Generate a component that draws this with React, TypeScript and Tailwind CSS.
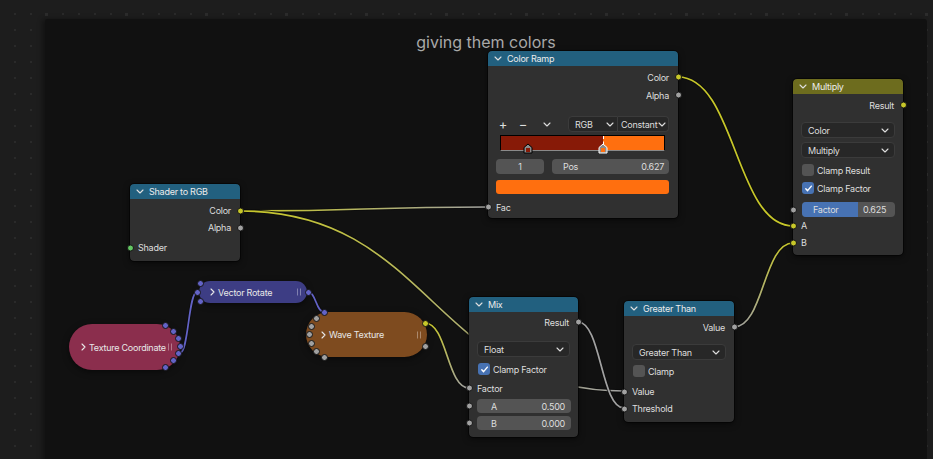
import clsx from "clsx";
import type { ReactNode } from "react";

const SY = "bg-[#c7c729]";
const SG = "bg-[#a1a1a1]";
const SGR = "bg-[#63c763]";
const SB = "bg-[#6363c7]";
const BLUE = "bg-[#22607f]";
const OLIVE = "bg-[#6d6c1e]";

const Down = ({ className }: { className?: string }) => (
  <svg viewBox="0 0 8 5" className={clsx("h-[5px] w-[8px] shrink-0", className)} fill="none" stroke="currentColor" strokeWidth="1.1" strokeLinecap="round" strokeLinejoin="round">
    <path d="M1 1l3 3 3-3" />
  </svg>
);

const Right = () => (
  <svg viewBox="0 0 5 8" className="h-[8px] w-[5px] shrink-0" fill="none" stroke="currentColor" strokeWidth="1.1" strokeLinecap="round" strokeLinejoin="round">
    <path d="M1 1l3 3-3 3" />
  </svg>
);

const Grip = ({ className }: { className: string }) => (
  <span className={clsx("absolute top-1/2 flex -translate-y-1/2 gap-[2px]", className)}>
    <span className="h-[7px] w-[1px] bg-white/35" />
    <span className="h-[7px] w-[1px] bg-white/35" />
  </span>
);

const Socket = ({ side, color }: { side: "l" | "r"; color: string }) => (
  <span className={clsx("absolute top-1/2 h-[7px] w-[7px] -translate-y-1/2 rounded-full border border-[#161616]", side === "l" ? "-left-[3.5px]" : "-right-[3.5px]", color)} />
);

const Dot = ({ pos, color }: { pos: string; color: string }) => (
  <span className={clsx("absolute h-[7px] w-[7px] rounded-full border border-[#161616]", pos, color)} />
);

const Row = ({ label, side, sock, h = "h-[18px]", className }: { label: string; side: "l" | "r"; sock?: string; h?: string; className?: string }) => (
  <div className={clsx("relative flex items-center px-[9px]", h, side === "r" ? "justify-end" : "justify-start pl-[8px]", className)}>
    <span>{label}</span>
    {sock && <Socket side={side} color={sock} />}
  </div>
);

const Select = ({ label, className }: { label: string; className?: string }) => (
  <div className={clsx("mx-[8px] flex h-[16px] items-center justify-between rounded-[4px] border border-[#3b3b3b] bg-[#272727] pl-[6px] pr-[5px]", className)}>
    <span>{label}</span>
    <Down />
  </div>
);

const Check = ({ label, on, className }: { label: string; on?: boolean; className?: string }) => (
  <div className={clsx("flex h-[18px] items-center gap-[3px] pl-[9px]", className)}>
    <span className={clsx("flex h-[12px] w-[12px] items-center justify-center rounded-[3px]", on ? "bg-[#4772b3]" : "bg-[#545454]")}>
      {on && (
        <svg viewBox="0 0 10 10" className="h-[9px] w-[9px]" fill="none" stroke="white" strokeWidth="1.6" strokeLinecap="round" strokeLinejoin="round">
          <path d="M2 5.2l2 2.2L8.2 2.4" />
        </svg>
      )}
    </span>
    <span>{label}</span>
  </div>
);

const Field = ({ label, value, sock, className }: { label: string; value: string; sock?: string; className?: string }) => (
  <div className={clsx("relative h-[14px]", className)}>
    {sock && <Socket side="l" color={sock} />}
    <div className="ml-[8px] mr-[7px] flex h-full items-center justify-between rounded-[4px] bg-[#545454] pl-[14px] pr-[6px]">
      <span>{label}</span>
      <span>{value}</span>
    </div>
  </div>
);

const NodeBox = ({ pos, title, head, children }: { pos: string; title: string; head: string; children: ReactNode }) => (
  <div className={clsx("absolute rounded-[4px] bg-[#303030] text-[#dedede] shadow-[0_2px_6px_rgba(0,0,0,0.55)] outline outline-1 outline-black/50", pos)}>
    <div className={clsx("flex h-[15px] items-center gap-[5px] rounded-t-[4px] pl-[6px] text-[#ececec]", head)}>
      <Down className="text-[#e0e0e0]" />
      <span>{title}</span>
    </div>
    {children}
  </div>
);

type Wire = { a: [number, number]; b: [number, number]; c1: string; c2: string };

const wires: Wire[] = [
  { a: [678, 77], b: [793, 226], c1: "#c7c729", c2: "#c7c729" },
  { a: [734, 327], b: [793, 243], c1: "#a1a1a1", c2: "#c7c729" },
  { a: [240, 211], b: [488, 207], c1: "#c7c729", c2: "#a1a1a1" },
  { a: [240, 211], b: [624, 391], c1: "#c7c729", c2: "#a1a1a1" },
  { a: [425, 323], b: [469, 388], c1: "#c7c729", c2: "#a1a1a1" },
  { a: [578, 322], b: [624, 408], c1: "#a1a1a1", c2: "#a1a1a1" },
  { a: [308, 292], b: [324, 312], c1: "#6363c7", c2: "#6363c7" },
  { a: [180, 353], b: [197, 292], c1: "#6363c7", c2: "#6363c7" },
];

const curve = ([x1, y1]: [number, number], [x2, y2]: [number, number]) => {
  const h = Math.max(Math.abs(x2 - x1) * 0.5, 6);
  return `M${x1} ${y1}C${x1 + h} ${y1} ${x2 - h} ${y2} ${x2} ${y2}`;
};

export default function App() {
  return (
    <div className="relative h-[459px] w-[933px] overflow-hidden bg-[#1d1d1d] font-['Inter','DejaVu_Sans',sans-serif] text-[9px] leading-none tracking-[-0.25px]">
      {/* background grid */}
      <svg className="absolute inset-0 h-full w-full">
        <defs>
          <pattern id="g" x="14" y="13" width="16" height="16" patternUnits="userSpaceOnUse">
            <rect width="2" height="2" fill="#2a2a2a" />
          </pattern>
          <pattern id="G" x="45" y="13" width="80" height="80" patternUnits="userSpaceOnUse">
            <rect width="3" height="3" fill="#2c2c2c" />
          </pattern>
        </defs>
        <rect width="100%" height="100%" fill="url(#g)" />
        <rect width="100%" height="100%" fill="url(#G)" />
      </svg>

      {/* frame */}
      <div className="relative ml-[45px] mt-[19px] h-[460px] w-[882px] rounded-t-[3px] bg-[#111111] shadow-[-3px_0_5px_rgba(0,0,0,0.35)]">
        <div className="pt-[14px] text-center text-[16px] leading-[18px] tracking-normal text-[#a9a9a9]">giving them colors</div>
      </div>

      {/* links */}
      <svg className="pointer-events-none absolute inset-0 h-full w-full">
        <defs>
          {wires.map((w, i) => (
            <linearGradient key={i} id={`w${i}`} gradientUnits="userSpaceOnUse" x1={w.a[0]} y1={w.a[1]} x2={w.b[0]} y2={w.b[1]}>
              <stop offset="0" stopColor={w.c1} />
              <stop offset="1" stopColor={w.c2} />
            </linearGradient>
          ))}
        </defs>
        {wires.map((w, i) => (
          <g key={i} fill="none">
            <path d={curve(w.a, w.b)} stroke="#0c0c0c" strokeOpacity="0.8" strokeWidth="3.6" />
            <path d={curve(w.a, w.b)} stroke={`url(#w${i})`} strokeWidth="1.7" />
          </g>
        ))}
      </svg>

      {/* Shader to RGB */}
      <NodeBox pos="left-[130px] top-[184px] w-[110px]" title="Shader to RGB" head={BLUE}>
        <div className="pt-[3px]" />
        <Row label="Color" side="r" sock={SY} h="h-[17px]" />
        <Row label="Alpha" side="r" sock={SG} h="h-[17px]" />
        <Row label="Shader" side="l" sock={SGR} h="h-[17px]" className="mt-[3px]" />
        <div className="pb-[5px]" />
      </NodeBox>

      {/* Color Ramp */}
      <NodeBox pos="left-[488px] top-[51px] w-[190px]" title="Color Ramp" head={BLUE}>
        <div className="pt-[2px]" />
        <Row label="Color" side="r" sock={SY} />
        <Row label="Alpha" side="r" sock={SG} />
        <div className="mt-[12px] flex h-[16px] items-center pl-[10px] pr-[9px]">
          <span className="w-[10px] text-center text-[13px]">+</span>
          <span className="ml-[10px] w-[10px] text-center text-[13px]">−</span>
          <span className="ml-[14px] flex w-[10px] justify-center"><Down /></span>
          <div className="ml-auto flex h-[16px]">
            <div className="flex w-[50px] items-center justify-between rounded-l-[4px] border border-[#3b3b3b] bg-[#272727] pl-[6px] pr-[3px]">
              <span>RGB</span>
              <Down />
            </div>
            <div className="flex w-[51px] items-center justify-between rounded-r-[4px] border border-l-0 border-[#3b3b3b] bg-[#272727] pl-[3px] pr-[2px]">
              <span>Constant</span>
              <Down />
            </div>
          </div>
        </div>
        <div className="relative ml-[12px] mr-[13px] mt-[3px] flex h-[16px] border border-black border-b-[#8a8a8a]">
          <div className="w-[102px] bg-[#871a07]" />
          <div className="flex-1 bg-[#ff6f0f]" />
          <span className="absolute left-[102px] top-0 h-full border-l border-dashed border-white" />
          <svg viewBox="0 0 10 11" className="absolute left-[22px] top-[7px] h-[11px] w-[10px]">
            <path d="M1 4.5L5 1l4 3.5V10H1z" fill="#8c8c8c" stroke="#000" strokeWidth="1" />
            <rect x="3" y="5" width="4" height="4" fill="#871a07" />
          </svg>
          <svg viewBox="0 0 10 11" className="absolute left-[97px] top-[7px] h-[11px] w-[10px]">
            <path d="M1 4.5L5 1l4 3.5V10H1z" fill="#8c8c8c" stroke="#fff" strokeWidth="1" />
            <rect x="3" y="5" width="4" height="4" fill="#ff6f0f" />
          </svg>
        </div>
        <div className="mt-[8px] flex h-[15px] gap-[8px] pl-[8px] pr-[9px]">
          <div className="flex w-[48px] items-center justify-center rounded-[4px] bg-[#545454]">1</div>
          <div className="flex flex-1 items-center justify-between rounded-[4px] bg-[#545454] pl-[11px] pr-[5px]">
            <span>Pos</span>
            <span>0.627</span>
          </div>
        </div>
        <div className="ml-[8px] mr-[9px] mt-[6px] h-[14px] rounded-[3px] bg-[#ff6f0f]" />
        <Row label="Fac" side="l" sock={SG} className="mt-[4px]" />
        <div className="pb-[2px]" />
      </NodeBox>

      {/* Multiply */}
      <NodeBox pos="left-[793px] top-[79px] w-[110px]" title="Multiply" head={OLIVE}>
        <div className="pt-[2px]" />
        <Row label="Result" side="r" sock={SY} />
        <Select label="Color" className="mt-[8px]" />
        <Select label="Multiply" className="mt-[4px]" />
        <Check label="Clamp Result" className="mt-[3px]" />
        <Check label="Clamp Factor" on />
        <div className="relative mt-[5px] h-[15px]">
          <Socket side="l" color={SG} />
          <div className="ml-[9px] mr-[8px] flex h-full overflow-hidden rounded-[4px] bg-[#545454]">
            <div className="flex w-[56px] items-center bg-[#4772b3] pl-[11px]">Factor</div>
            <div className="flex flex-1 items-center pl-[5px]">0.625</div>
          </div>
        </div>
        <Row label="A" side="l" sock={SY} h="h-[17px]" />
        <Row label="B" side="l" sock={SY} h="h-[17px]" />
        <div className="pb-[4px]" />
      </NodeBox>

      {/* Mix */}
      <NodeBox pos="left-[469px] top-[297px] w-[109px]" title="Mix" head={BLUE}>
        <div className="pt-[1px]" />
        <Row label="Result" side="r" sock={SG} />
        <Select label="Float" className="mx-[7px] mt-[10px]" />
        <Check label="Clamp Factor" on className="mt-[3px] pl-[8px]" />
        <Row label="Factor" side="l" sock={SG} className="mt-[1px]" />
        <Field label="A" value="0.500" sock={SG} className="mt-[2px]" />
        <Field label="B" value="0.000" sock={SG} className="mt-[3px]" />
        <div className="pb-[7px]" />
      </NodeBox>

      {/* Greater Than */}
      <NodeBox pos="left-[624px] top-[301px] w-[110px]" title="Greater Than" head={BLUE}>
        <div className="pt-[2px]" />
        <Row label="Value" side="r" sock={SG} />
        <Select label="Greater Than" className="mt-[8px]" />
        <Check label="Clamp" className="mt-[2px]" />
        <Row label="Value" side="l" sock={SG} h="h-[17px]" className="mt-[3px]" />
        <Row label="Threshold" side="l" sock={SG} h="h-[17px]" />
        <div className="pb-[5px]" />
      </NodeBox>

      {/* Texture Coordinate (collapsed) */}
      <div className="absolute left-[69px] top-[324px] flex h-[46px] w-[111px] items-center gap-[3px] rounded-full bg-[#8b2e4d] pl-[12px] text-[#e8e8e8] shadow-[0_2px_6px_rgba(0,0,0,0.5)]">
        <Right />
        <span>Texture Coordinate</span>
        <Grip className="right-[8px]" />
        <Dot pos="left-[92.5px] -top-[2.5px]" color={SB} />
        <Dot pos="left-[100.5px] top-[3.5px]" color={SB} />
        <Dot pos="left-[105.5px] top-[10.5px]" color={SB} />
        <Dot pos="left-[107.5px] top-[18.5px]" color={SB} />
        <Dot pos="left-[105.5px] top-[25.5px]" color={SB} />
        <Dot pos="left-[100.5px] top-[32.5px]" color={SB} />
        <Dot pos="left-[92.5px] top-[39.5px]" color={SB} />
      </div>

      {/* Vector Rotate (collapsed) */}
      <div className="absolute left-[199px] top-[281px] flex h-[22px] w-[108px] items-center gap-[3px] rounded-full bg-[#3d3d84] pl-[11px] text-[#e8e8e8] shadow-[0_2px_6px_rgba(0,0,0,0.5)]">
        <Right />
        <span>Vector Rotate</span>
        <Grip className="right-[6px]" />
        <Dot pos="-left-[2.5px] -top-[1.5px]" color={SB} />
        <Dot pos="-left-[5.5px] top-[7.5px]" color={SB} />
        <Dot pos="-left-[2.5px] top-[16.5px]" color={SB} />
        <Dot pos="left-[105.5px] top-[7.5px]" color={SB} />
      </div>

      {/* Wave Texture (collapsed) */}
      <div className="absolute left-[306px] top-[312px] flex h-[45px] w-[121px] items-center gap-[3px] rounded-full bg-[#7e4b1f] pl-[15px] text-[#e8e8e8] shadow-[0_2px_6px_rgba(0,0,0,0.5)]">
        <Right />
        <span>Wave Texture</span>
        <Grip className="right-[6px]" />
        <Dot pos="left-[14.5px] -top-[3.5px]" color={SB} />
        <Dot pos="left-[6.5px] top-[2.5px]" color={SG} />
        <Dot pos="left-[1.5px] top-[10.5px]" color={SG} />
        <Dot pos="-left-[0.5px] top-[18.5px]" color={SG} />
        <Dot pos="left-[1.5px] top-[27.5px]" color={SG} />
        <Dot pos="left-[6.5px] top-[35.5px]" color={SG} />
        <Dot pos="left-[14.5px] top-[41.5px]" color={SG} />
        <Dot pos="left-[115.5px] top-[7.5px]" color={SY} />
        <Dot pos="left-[115.5px] top-[30.5px]" color={SG} />
      </div>
    </div>
  );
}
